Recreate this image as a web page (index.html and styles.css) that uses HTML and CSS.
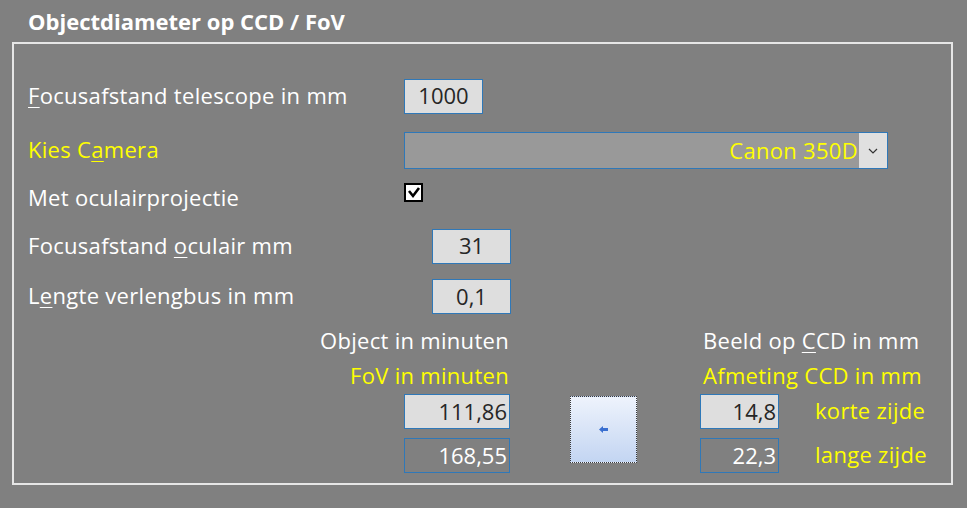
FILE: index.html
```html
<!DOCTYPE html>
<html lang="nl">
<head>
  <meta charset="UTF-8" />
  <title>Objectdiameter op CCD / FoV</title>
  <link rel="stylesheet" href="styles.css">
</head>
<body>
  <div class="title">Objectdiameter op CCD / FoV</div>
  <div class="frame">
    <div class="row r1">
      <div class="label"><u>F</u>ocusafstand telescope in mm</div>
      <div class="field w-short">1000</div>
    </div>
    <div class="row r2">
      <div class="label yellow">Kies C<u>a</u>mera</div>
      <div class="combo">
        <div class="combo-value">Canon 350D</div>
        <div class="combo-btn">
          <svg width="10" height="6" viewBox="0 0 10 6"><path d="M1 1 L5 5 L9 1" fill="none" stroke="#333" stroke-width="1.2"/></svg>
        </div>
      </div>
    </div>
    <div class="row r3">
      <div class="label">Met oculairprojectie</div>
      <div class="check">
        <svg width="14" height="14" viewBox="0 0 14 14"><path d="M2 5 L6 10 L12 2" fill="none" stroke="#000" stroke-width="2.6"/></svg>
      </div>
    </div>
    <div class="row r4">
      <div class="label">Focusafstand <u>o</u>culair mm</div>
      <div class="field w-short indent">31</div>
    </div>
    <div class="row r5">
      <div class="label">L<u>e</u>ngte verlengbus in mm</div>
      <div class="field w-short indent">0,1</div>
    </div>

    <div class="bottom">
      <div class="col-left">
        <div class="head">Object in minuten</div>
        <div class="head yellow">FoV in minuten</div>
        <div class="field w-long right first">111,86</div>
        <div class="field w-long right dark second">168,55</div>
      </div>
      <div class="calc-btn">
        <svg width="9" height="7" viewBox="0 0 9 7"><path d="M0 3.5 L4 0 L4 2 L9 2 L9 5 L4 5 L4 7 Z" fill="#3a6fd0"/></svg>
      </div>
      <div class="col-right">
        <div class="head">Beeld op <u>C</u>CD in mm</div>
        <div class="head yellow">Afmeting CCD in mm</div>
        <div class="side-row first">
          <div class="field w-short right">14,8</div>
          <div class="side-label yellow">korte zijde</div>
        </div>
        <div class="side-row second">
          <div class="field w-short right dark">22,3</div>
          <div class="side-label yellow">lange zijde</div>
        </div>
      </div>
    </div>
  </div>
</body>
</html>
```

FILE: styles.css
```css
:root {
  --page-background: #808080;
  --frame-color: #e6e6e6;
  --field-background: #dedede;
  --field-border: #2f78b8;
  --field-text: #262626;
  --yellow: #ffff00;
}
body {
  margin: 0;
  width: 967px;
  height: 508px;
  background-color: var(--page-background);
  font-family: "Open Sans", sans-serif;
  font-size: 22px;
  letter-spacing: 0.3px;
  color: #ffffff;
  overflow: hidden;
}
u {
  text-decoration-thickness: 1px;
  text-underline-offset: 3px;
}
.yellow {
  color: var(--yellow);
}
.title {
  height: 42px;
  padding-left: 28px;
  padding-bottom: 1px;
  display: flex;
  align-items: center;
  font-weight: bold;
  font-size: 22px;
  letter-spacing: 0;
  box-sizing: border-box;
}
.frame {
  margin-left: 12px;
  width: 941px;
  height: 443px;
  border: 2px solid var(--frame-color);
  box-sizing: border-box;
  padding-left: 14px;
}
.row {
  display: flex;
  align-items: center;
}
.label {
  width: 376px;
  flex-shrink: 0;
  white-space: nowrap;
  line-height: 30px;
  padding-bottom: 3px;
}
.r1 { margin-top: 34px; height: 36px; }
.r2 { margin-top: 18px; height: 37px; }
.r3 { margin-top: 10px; height: 38px; }
.r4 { margin-top: 11px; height: 36px; }
.r5 { margin-top: 15px; height: 35px; }

.field {
  box-sizing: border-box;
  height: 35px;
  border: 1px solid var(--field-border);
  background-color: var(--field-background);
  color: var(--field-text);
  display: flex;
  align-items: center;
  justify-content: center;
  padding: 0 2px 2px;
  letter-spacing: 0;
}
.w-short { width: 79px; }
.w-long { width: 106px; }
.indent { margin-left: 28px; }
.right { justify-content: flex-end; }
.dark {
  background-color: var(--page-background);
  color: #ffffff;
}
.combo {
  box-sizing: border-box;
  width: 484px;
  height: 37px;
  border: 1px solid var(--field-border);
  background-color: #999999;
  display: flex;
}
.combo-value {
  flex-grow: 1;
  display: flex;
  align-items: center;
  justify-content: flex-end;
  color: var(--yellow);
  padding: 0 1px 2px 0;
}
.combo-btn {
  width: 28px;
  background-color: #e0e0e0;
  display: flex;
  align-items: center;
  justify-content: center;
}
.check {
  align-self: flex-start;
  margin-top: 4px;
  width: 19px;
  height: 19px;
  box-sizing: border-box;
  border: 2px solid #000;
  background-color: #ffffff;
  display: flex;
  align-items: center;
  justify-content: center;
}
.bottom {
  display: flex;
  margin-top: 10px;
}
.col-left {
  width: 482px;
  display: flex;
  flex-direction: column;
  align-items: flex-end;
}
.head {
  height: 35px;
  line-height: 32px;
  white-space: nowrap;
}
.col-left .head {
  padding-right: 1px;
}
.first { margin-top: 0; }
.second { margin-top: 9px; }
.calc-btn {
  margin-left: 60px;
  margin-top: 72px;
  width: 67px;
  height: 67px;
  box-sizing: border-box;
  border: 1px dotted #3a3a3a;
  background: linear-gradient(#eef3fc, #c3d5f2);
  display: flex;
  align-items: center;
  justify-content: center;
}
.col-right {
  margin-left: 63px;
  display: flex;
  flex-direction: column;
}
.col-right .head {
  padding-left: 3px;
}
.side-row {
  display: flex;
  align-items: center;
}
.side-label {
  margin-left: 36px;
  white-space: nowrap;
  padding-bottom: 3px;
}
```
